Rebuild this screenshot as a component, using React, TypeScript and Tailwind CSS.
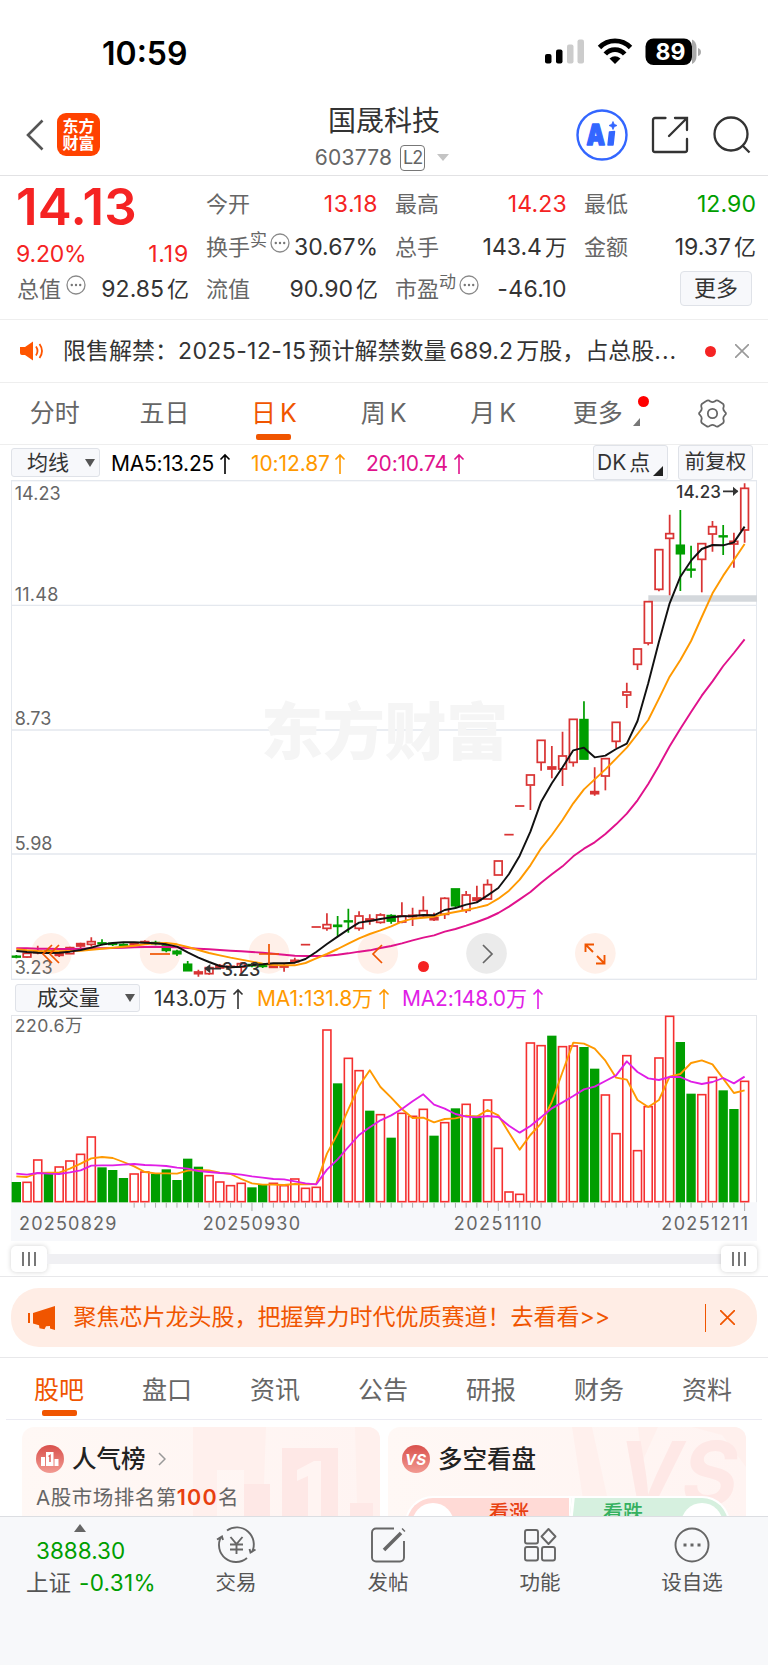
import type { ReactNode } from "react";

const RED = "#d93434";
const GREEN = "#009e00";
const FIRST_X = 16;
const STEP = 32.13;

// [up, high, top, bottom, low] in chart units, three to a pixel
const candles: [number, number, number, number, number][] = [
  [0, 1425, 1428, 1432, 1435], [1, 1416, 1419, 1432, 1434], [1, 1397, 1413, 1419, 1423], [0, 1405, 1412, 1418, 1422],
  [1, 1415, 1419, 1427, 1431], [1, 1400, 1402, 1422, 1422], [1, 1388, 1390, 1399, 1405], [1, 1372, 1384, 1394, 1400],
  [0, 1378, 1388, 1392, 1396], [0, 1386, 1389, 1394, 1398], [0, 1390, 1393, 1397, 1400], [1, 1387, 1390, 1396, 1399],
  [1, 1381, 1384, 1388, 1392], [0, 1382, 1387, 1392, 1396], [0, 1395, 1397, 1412, 1417], [0, 1409, 1413, 1422, 1428],
  [0, 1443, 1452, 1473, 1473], [1, 1469, 1475, 1482, 1490], [1, 1458, 1462, 1482, 1484], [1, 1452, 1456, 1465, 1467],
  [1, 1455, 1458, 1462, 1466], [1, 1446, 1450, 1462, 1484], [0, 1448, 1453, 1458, 1462], [0, 1450, 1455, 1460, 1464],
  [1, 1452, 1455, 1463, 1463], [1, 1452, 1457, 1462, 1475], [1, 1433, 1440, 1446, 1450], [1, 1394, 1394, 1394, 1394],
  [1, 1341, 1341, 1341, 1341], [1, 1300, 1333, 1346, 1352], [0, 1308, 1335, 1340, 1370], [0, 1286, 1322, 1326, 1358],
  [1, 1294, 1307, 1346, 1352], [1, 1303, 1316, 1323, 1334], [1, 1300, 1304, 1328, 1331], [0, 1303, 1306, 1324, 1331],
  [1, 1267, 1307, 1327, 1330], [1, 1283, 1305, 1311, 1338], [1, 1249, 1291, 1308, 1310], [1, 1298, 1312, 1320, 1323],
  [1, 1252, 1254, 1304, 1317], [0, 1226, 1226, 1278, 1285], [1, 1233, 1244, 1292, 1299], [1, 1217, 1253, 1262, 1266],
  [1, 1198, 1213, 1258, 1258], [1, 1142, 1142, 1186, 1186], [1, 1064, 1064, 1064, 1064], [1, 978, 978, 978, 978],
  [1, 884, 884, 916, 990], [1, 780, 780, 848, 872], [1, 798, 860, 868, 895], [1, 755, 827, 868, 918],
  [1, 717, 717, 848, 860], [0, 664, 718, 838, 838], [1, 862, 934, 942, 947], [1, 835, 835, 889, 931],
  [1, 726, 726, 785, 804], [1, 608, 635, 646, 684], [1, 506, 506, 554, 570], [1, 364, 364, 490, 496],
  [1, 208, 208, 329, 334], [1, 104, 160, 176, 346], [0, 90, 195, 222, 333], [0, 197, 267, 271, 293],
  [1, 190, 190, 239, 337], [1, 123, 139, 163, 215], [0, 135, 167, 171, 225], [1, 158, 183, 193, 263],
  [1, 10, 24, 151, 188],
];

const ma5 = [
  1413, 1416, 1418, 1419, 1418, 1415, 1410, 1403, 1394, 1389, 1387, 1387, 1388, 1390, 1393, 1400, 1417, 1433, 1446, 1458,
  1462, 1460, 1455, 1453, 1450, 1450, 1448, 1437, 1416, 1392, 1370, 1348, 1328, 1323, 1317, 1312, 1309, 1308, 1305, 1306,
  1290, 1284, 1274, 1267, 1246, 1224, 1182, 1127, 1055, 965, 910, 862, 811, 803, 832, 827, 807, 791, 723, 610,
  485, 370, 290, 242, 207, 195, 196, 187, 140,
];
const ma10 = [
  1408, 1411, 1413, 1414, 1414, 1413, 1412, 1409, 1406, 1403, 1400, 1397, 1393, 1390, 1389, 1393, 1401, 1410, 1419, 1426,
  1433, 1439, 1445, 1451, 1455, 1456, 1456, 1449, 1435, 1422, 1407, 1391, 1375, 1362, 1351, 1339, 1325, 1316, 1313, 1310,
  1302, 1296, 1290, 1283, 1275, 1256, 1232, 1199, 1156, 1105, 1065, 1020, 970, 928, 898, 868, 836, 803, 762, 720,
  656, 590, 540, 483, 411, 340, 287, 240, 192,
];
const ma20 = [
  1405, 1405, 1406, 1406, 1407, 1407, 1406, 1405, 1405, 1404, 1403, 1402, 1401, 1400, 1401, 1402, 1404, 1406, 1408, 1410,
  1412, 1414, 1416, 1418, 1421, 1424, 1427, 1428, 1428, 1427, 1424, 1420, 1415, 1411, 1404, 1398, 1390, 1381, 1373, 1366,
  1355, 1347, 1337, 1326, 1314, 1299, 1280, 1258, 1236, 1208, 1183, 1159, 1129, 1106, 1087, 1062, 1033, 1001, 961, 912,
  857, 799, 746, 696, 647, 604, 558, 519, 478,
];

// top edge of each volume bar
const volumes = [
  605, 605, 538, 580, 559, 541, 521, 469, 561, 569, 593, 580, 574, 580, 567, 599, 535, 559, 585, 604,
  615, 608, 621, 613, 608, 615, 595, 623, 620, 148, 309, 233, 270, 391, 402, 472, 398, 407, 386, 466,
  426, 384, 371, 406, 358, 503, 634, 641, 187, 195, 166, 198, 196, 200, 265, 343, 459, 225, 510, 378,
  232, 107, 185, 340, 342, 290, 330, 386, 302,
];
const falling = [0, 3, 8, 9, 10, 13, 14, 15, 16, 17, 22, 23, 30, 33, 35, 39, 41, 43, 50, 53, 54, 62, 63, 66, 67];
const volMa1 = [
  588, 590, 578, 577, 577, 565, 550, 534, 530, 533, 545, 558, 575, 579, 579, 580, 571, 569, 570, 577,
  581, 596, 609, 613, 613, 614, 611, 612, 611, 520, 460, 387, 317, 270, 320, 352, 386, 413, 412, 426,
  416, 414, 406, 409, 389, 405, 457, 508, 464, 429, 365, 275, 187, 190, 205, 241, 292, 298, 359, 380,
  359, 289, 281, 248, 240, 252, 295, 338, 330,
];
const volMa2 = [
  580, 583, 578, 580, 581, 576, 570, 556, 555, 555, 553, 551, 554, 555, 557, 562, 565, 572, 575, 578,
  580, 583, 588, 592, 596, 597, 603, 609, 612, 568, 537, 500, 464, 441, 420, 405, 386, 363, 342, 373,
  385, 401, 409, 411, 407, 410, 436, 457, 437, 411, 384, 366, 347, 327, 319, 302, 285, 243, 275, 294,
  299, 290, 290, 304, 311, 305, 293, 309, 289,
];

const x = (i: number) => FIRST_X + i * STEP;
const line = (ys: number[]) => ys.map((y, i) => `${x(i).toFixed(1)},${y}`).join(" ");

function Up() {
  return (
    <svg viewBox="0 0 12 22" className="h-[22px] w-3 shrink-0" fill="none" stroke="currentColor" strokeWidth="1.6">
      <path d="M6 21V2M1.500 6.500 6 2l4.500 4.500" />
    </svg>
  );
}

function Info() {
  return (
    <svg viewBox="0 0 20 20" className="size-5 shrink-0" fill="none" stroke="#8a8a8a" strokeWidth="1.300">
      <circle cx="10" cy="10" r="9" />
      <g fill="#777" stroke="none">
        <circle cx="5.800" cy="10" r="1.200" />
        <circle cx="10" cy="10" r="1.200" />
        <circle cx="14.200" cy="10" r="1.200" />
      </g>
    </svg>
  );
}

function StatusBar() {
  return (
    <div className="flex h-[90px] items-center pt-[17px] pl-[102px] text-black">
      <span className="w-[443px] text-[32px] font-semibold">10:59</span>
      <svg viewBox="0 0 158 30" className="mb-[3px] h-[30px] w-[158px]">
        <rect x="0" y="17" width="6.500" height="9.500" rx="2" />
        <rect x="11" y="12.500" width="6.500" height="14" rx="2" />
        <rect x="22" y="7.500" width="6.500" height="19" rx="2" fill="#ccc" />
        <rect x="32.500" y="2.500" width="6.500" height="24" rx="2" fill="#ccc" />
        <g fill="none" stroke="#000" strokeWidth="4.800">
          <path d="M54.500 10.500a21.500 21.500 0 0 1 31 0" />
          <path d="M60.300 17a13 13 0 0 1 19.400 0" />
        </g>
        <path d="M64.500 21.500q5.500-4.500 11 0L70 27z" />
        <path d="M147 2.500q4.500 2 4.500 8v8.500q0 6-4.500 8z" fill="#aaa" />
        <rect x="100.500" y="1.500" width="46.500" height="26.500" rx="8" />
        <path d="M153 11q3 1 3 4t-3 4z" fill="#aaa" />
        <text x="125.500" y="23" textAnchor="middle" fill="#fff" className="text-[23px] font-bold">89</text>
      </svg>
    </div>
  );
}

function Header() {
  return (
    <header className="grid h-[86px] grid-cols-[1fr_auto_1fr] items-center border-b border-[#e2e2e4] pt-1">
      <div className="flex items-center gap-[13px] pl-[26px]">
        <svg viewBox="0 0 18 32" className="h-8 w-[18px]" fill="none" stroke="#555" strokeWidth="2.600">
          <path d="M16.500 1.500 2 16l14.500 14.500" />
        </svg>
        <div className="flex size-[43px] flex-col items-center justify-center rounded-[9px] bg-[#ff4200] text-[16px] leading-[17px] font-bold text-white">
          <span>东方</span>
          <span>财富</span>
        </div>
      </div>
      <div className="flex flex-col items-center pt-2 text-[#333]">
        <h1 className="text-[28px] leading-[34px]">国晟科技</h1>
        <div className="flex h-[36px] items-center pt-1 text-[21px] text-[#666]">
          <span className="tracking-[0.2px]">603778</span>
          <span className="ml-2 flex h-[26px] w-[25px] items-center justify-center rounded-[4px] border border-[#777] text-[18px] tracking-[-1px]">L2</span>
          <span className="mr-1 ml-3 border-x-6 border-t-7 border-x-transparent border-t-[#c4c4c4]" />
        </div>
      </div>
      <div className="flex items-center justify-end pr-[17px]">
        <svg viewBox="0 0 52 52" className="mr-[23px] size-[52px]">
          <circle cx="26" cy="26" r="24.500" fill="none" stroke="#3366ff" strokeWidth="2.400" />
          <g fill="#3366ff" stroke="#3366ff" strokeLinejoin="round">
            <text x="10.500" y="35.500" strokeWidth="1.500" textLength="18.500" lengthAdjust="spacingAndGlyphs" className="text-[29px] font-black">A</text>
            <path d="m33.500 23 5-.5-1.500 13.500h-5z" strokeWidth="1.500" />
            <path d="M37 12.500l1.200 2.800 2.800 1.200-2.800 1.200L37 20.500l-1.200-2.800-2.800-1.200 2.800-1.200z" strokeWidth="0.800" />
          </g>
        </svg>
        <svg viewBox="0 0 38 38" className="mr-6 size-[38px]" fill="none" stroke="#333" strokeWidth="2.300" strokeLinecap="round">
          <path d="M14.500 2H4a2 2 0 0 0-2 2v30a2 2 0 0 0 2 2h30a2 2 0 0 0 2-2V23M24 2h12v12M36 2 18 20" />
        </svg>
        <svg viewBox="0 0 38 38" className="size-[38px]" fill="none" stroke="#333" strokeWidth="2.300">
          <circle cx="18" cy="18" r="16.500" />
          <path d="m29.500 29.500 7 7" />
        </svg>
      </div>
    </header>
  );
}

function Stat({ label, sup, info, value, unit, tone = "text-[#333]" }: { label: string; sup?: string; info?: boolean; value: string; unit?: string; tone?: string }) {
  return (
    <div className="flex h-[43px] items-center justify-between text-[22px]">
      <span className="flex items-center text-[#666]">
        {label}
        {sup && <sup className="-top-2 text-[17px]">{sup}</sup>}
        {info && <span className={`-mt-2.5 ${sup ? "ml-[3px]" : "ml-[5px]"}`}><Info /></span>}
      </span>
      <span className={`${tone} text-[23px] whitespace-nowrap`}>{value}{unit && <span className="ml-[3px] text-[22px]">{unit}</span>}</span>
    </div>
  );
}

function Quote() {
  return (
    <section className="grid h-[144px] grid-cols-[172px_172px_172px_172px] gap-x-[17px] border-b border-[#eee] pt-[7px] pl-[17px]">
      <div>
        <div className="-ml-px flex h-[48px] items-center text-[51px] font-semibold tracking-[0.3px] text-[#f52323]">14.13</div>
        <div className="flex h-[43px] items-center justify-between pt-[3px] text-[23px] text-[#f52323]">
          <span className="-ml-px tracking-[-0.2px]">9.20%</span>
          <span className="tracking-[0.8px]">1.19</span>
        </div>
        <div className="-mt-[6px]"><Stat label="总值" info value="92.85" unit="亿" /></div>
      </div>
      <div>
        <Stat label="今开" value="13.18" tone="text-[#f52323] tracking-[0.6px]" />
        <Stat label="换手" sup="实" info value="30.67%" />
        <div className="-mt-px"><Stat label="流值" value="90.90" unit="亿" /></div>
      </div>
      <div>
        <Stat label="最高" value="14.23" tone="text-[#f52323] tracking-[0.2px]" />
        <Stat label="总手" value="143.4" unit="万" />
        <div className="-mt-px"><Stat label="市盈" sup="动" info value="-46.10" tone="text-[#333] tracking-[0.4px]" /></div>
      </div>
      <div>
        <Stat label="最低" value="12.90" tone="text-[#009e00] tracking-[0.1px]" />
        <Stat label="金额" value="19.37" unit="亿" />
        <div className="mt-0.5 mr-1 ml-auto flex h-[35px] w-[72px] items-center justify-center rounded-[4px] border border-[#dfe2e8] bg-[#f7f8fb] text-[22px] text-[#333]">更多</div>
      </div>
    </section>
  );
}

function Notice() {
  return (
    <section className="flex h-[63px] items-center border-b border-[#eee] pl-5 text-[23px] text-[#333]">
      <svg viewBox="0 0 24 20" className="h-5 w-6" fill="none" stroke="#ff5500" strokeWidth="1.800">
        <path d="M0 6h5l8-5.500v19L5 14H2q-2 0-2-2z" fill="#ff5500" stroke="none" />
        <path d="M16 5.500q3 4.500 0 9M19.500 3q5 7 0 14" />
      </svg>
      <p className="ml-[19px] w-[615px] whitespace-nowrap">
        限售解禁：<span className="mr-0.5 tracking-[0.4px]">2025-12-15</span>预计解禁数量<span className="mx-[3px] tracking-[0.2px]">689.2</span>万股，占总股<span className="tracking-[1px]">...</span>
      </p>
      <span className="ml-[27px] size-[11px] rounded-full bg-[#f52323]" />
      <svg viewBox="0 0 14 14" className="ml-[19px] size-3.5" stroke="#999" strokeWidth="1.600"><path d="m0 0 14 14M14 0 0 14" /></svg>
    </section>
  );
}

function PeriodTabs() {
  return (
    <nav className="flex h-[62px] border-b border-[#eee] text-[25px] text-[#666]">
      {["分时", "五日", "日 K", "周 K", "月 K", "更多"].map((t) => (
        <div key={t} className={`relative flex w-[109.600px] items-center justify-center [word-spacing:-3px] ${t === "日 K" ? "text-[#f05500]" : ""} ${t === "更多" ? "pr-[10px]" : ""}`}>
          {t}
          {t === "日 K" && <span className="absolute bottom-1 h-1.5 w-[35px] rounded-[2px] bg-[#f05500]" />}
          {t === "更多" && (
            <>
              <span className="absolute top-[13px] right-[9px] size-[11px] rounded-full bg-[#f00]" />
              <span className="absolute right-[18px] bottom-[18px] border-b-8 border-l-7 border-b-[#777] border-l-transparent" />
            </>
          )}
        </div>
      ))}
      <div className="flex flex-1 items-center justify-center">
        <svg viewBox="0 0 28 28" className="size-[29px]" fill="none" stroke="#666" strokeWidth="1.700" strokeLinejoin="round">
          <path d="M8 2q2-1.500 4 .5 2 1.200 4 0 2-2 4-.5l4 2.500q1.500 1.500.5 4-.5 2 1.500 4 2 1.500 0 3-2 2-1.500 4 1 2.500-.5 4L20 26q-2 1.500-4-.5-2-1.200-4 0-2 2-4 .5l-4-2.500q-1.500-1.500-.5-4 .5-2-1.500-4-2-1.500 0-3 2-2 1.500-4-1-2.500.5-4z" />
          <circle cx="14" cy="14" r="4.500" />
        </svg>
      </div>
    </nav>
  );
}

function Candles() {
  return (
    <svg viewBox="0 0 2238 1500" className="h-[500px] w-[746px]">
      <g stroke="#e4e8ee" strokeWidth="4" fill="none">
        <path d="M0 376h2238M0 750h2238M0 1122h2238" />
        <rect x="1" y="2" width="2236" height="1496" />
      </g>
      <text x="750" y="825" textLength="742" fill="#f5f5f5" className="text-[186px] font-black">东方财富</text>
      <path d="M1912 346h326v19h-326z" fill="#d4d8dc" />
      {[0, 1, 2, 3, 4, 5].map((n) => (
        <circle key={n} cx={121 + n * 326.4} cy="1420" r="61" fill={n === 4 ? "#ebebeb" : "#fff0e9"} />
      ))}
      {candles.map(([up, high, top, bottom, low], i) => (
        <g key={i} stroke={up ? RED : GREEN} strokeWidth="5.200" fill={up ? (bottom - top > 9 ? "#fff" : RED) : GREEN}>
          <path d={`M${x(i)} ${high}V${top}M${x(i)} ${bottom}V${low}`} />
          {top === bottom ? <path d={`M${x(i) - 14} ${top}h28`} /> : <rect x={x(i) - 11.5} y={top + 1} width="23" height={bottom - top - 2} />}
        </g>
      ))}
      <g fill="none" strokeWidth="5.800" strokeLinejoin="round">
        <polyline points={line(ma20)} stroke="#e0128c" />
        <polyline points={line(ma10)} stroke="#ff9900" />
        <polyline points={line(ma5)} stroke="#111" />
      </g>
      <g fill="#666" className="text-[54px]">
        <text x="11" y="60" textLength="138">14.23</text>
        <text x="11" y="362" textLength="131">11.48</text>
        <text x="11" y="736">8.73</text>
        <text x="11" y="1109">5.98</text>
        <text x="11" y="1482">3.23</text>
      </g>
      <g fill="#333" className="text-[51px] font-medium">
        <text x="1996" y="53" textLength="134">14.23</text>
        <text x="632" y="1487" className="text-[54px]">3.23</text>
      </g>
      <path d="M2136 34h44M584 1466h46" stroke="#333" strokeWidth="5" />
      <path d="m2166 20 16 14-16 14zM598 1452l-18 14 18 14z" fill="#333" />
    </svg>
  );
}

function ChartAction({ gray, children }: { gray?: boolean; children: ReactNode }) {
  return (
    <div className={`flex size-[41px] items-center justify-center ${gray ? "text-[#666]" : "text-[#f05500]"}`}>
      <svg viewBox="0 0 24 24" className="size-6" fill="none" stroke="currentColor" strokeWidth="1.700">{children}</svg>
    </div>
  );
}

function PriceChart() {
  return (
    <section className="relative mx-[11px] h-[500px]">
      <Candles />
      <div className="absolute top-[453px] left-5 flex gap-[67.800px]">
        <ChartAction><path d="m12 3-9 9 9 9M19 3l-9 9 9 9" /></ChartAction>
        <ChartAction><path d="M2 12h20" /></ChartAction>
        <ChartAction><path d="M2 12h20M12 2v20" /></ChartAction>
        <ChartAction><path d="m16 3-9 9 9 9" /></ChartAction>
        <ChartAction gray><path d="m8 3 9 9-9 9" /></ChartAction>
        <ChartAction><path d="M2.500 10V2.500H11M3 3l7 7M21.500 13v8.500H13M21 21l-7-7" strokeWidth="1.900" /></ChartAction>
      </div>
      <span className="absolute top-[481px] left-[407px] size-[11px] rounded-full bg-[#f52323]" />
    </section>
  );
}

function AverageRow() {
  return (
    <div className="flex h-[35px] items-center pl-[11px] text-[21px]">
      <div className="flex h-[29px] w-[89px] items-center justify-between rounded-[3px] border border-[#dfe2e8] bg-[#f7f8fb] pr-1 pl-[15px] text-[#333]">
        均线<span className="border-x-5 border-t-8 border-x-transparent border-t-[#555]" />
      </div>
      <span className="ml-[11px] flex w-[140px] items-center justify-between pt-0.5 pr-[20px] text-black"><span className="tracking-[-0.2px]">MA5:13.25</span><Up /></span>
      <span className="flex w-[115px] items-center justify-between pt-0.5 pr-[20px] text-[#ff9900]"><span className="tracking-[-0.1px]">10:12.87</span><Up /></span>
      <span className="flex w-[99px] items-center justify-between pt-0.5 text-[#e0128c]"><span className="tracking-[-0.2px]">20:10.74</span><Up /></span>
      <div className="relative ml-auto flex h-[35px] w-[75px] items-center rounded-[3px] border border-[#dfe2e8] bg-[#f7f8fb] pl-[3px] text-[#333] [word-spacing:-3px]">
        DK 点<span className="absolute right-1 bottom-[3px] border-b-10 border-l-10 border-b-[#222] border-l-transparent" />
      </div>
      <div className="mr-[15px] ml-2.5 flex h-[35px] w-[75px] items-center justify-center rounded-[3px] border border-[#dfe2e8] bg-[#f7f8fb] text-[20.500px] text-[#333]">前复权</div>
    </div>
  );
}

function VolumeRow() {
  return (
    <div className="flex h-[35px] items-center pl-[15px] text-[21px]">
      <div className="flex h-7 w-[125px] items-center justify-between rounded-[3px] border border-[#dfe2e8] bg-[#f7f8fb] pr-1 pl-[21px] text-[#333]">
        成交量<span className="border-x-5 border-t-8 border-x-transparent border-t-[#555]" />
      </div>
      <span className="ml-[14px] flex w-[103px] items-center justify-between pt-0.5 pr-[13px] text-[#333]"><span className="tracking-[-0.2px]">143.0万</span><Up /></span>
      <span className="flex w-[145px] items-center justify-between pt-0.5 pr-[12px] text-[#ff9900]"><span className="tracking-[-0.1px]">MA1:131.8万</span><Up /></span>
      <span className="flex w-[142px] items-center justify-between pt-0.5 text-[#e01ee6]"><span className="tracking-[-0.2px]">MA2:148.0万</span><Up /></span>
    </div>
  );
}

function VolumeChart() {
  return (
    <section className="mx-[11px] h-[226px]">
      <svg viewBox="0 104 2238 678" className="h-[226px] w-[746px]">
        <path d="M0 666h2238v116H0z" fill="#f7f8fb" />
        <path d="M1 666V105h2236v561" fill="none" stroke="#e4e6ea" strokeWidth="4" />
        {volumes.map((top, i) =>
          falling.includes(i) ? (
            <rect key={i} x={x(i) - 14} y={top} width="28" height={666 - top} fill={GREEN} />
          ) : (
            <rect key={i} x={x(i) - 12} y={top + 1} width="24" height={663 - top} fill="#fff" stroke="#f5302f" strokeWidth="4.800" />
          ),
        )}
        <g fill="none" strokeWidth="5.600" strokeLinejoin="round">
          <polyline points={line(volMa1)} stroke="#ff9900" />
          <polyline points={line(volMa2)} stroke="#e01ee6" />
        </g>
        {volumes.map((_, i) => i > 10 && <path key={i} d={`M${x(i)} 667v${i % 23 === 22 || i === 68 ? 25 : 15}`} stroke="#aaa" strokeWidth="3" />)}
        <g fill="#666" className="text-[54px]">
          <text x="11" y="156" textLength="204" className="text-[53px]">220.6万</text>
          <text x="24" y="749" textLength="292">20250829</text>
          <text x="575" y="749" textLength="292">20250930</text>
          <text x="1328" y="749" textLength="264">20251110</text>
          <text x="1951" y="749" textLength="260">20251211</text>
        </g>
      </svg>
    </section>
  );
}

function Grip() {
  return (
    <div className="flex h-[26px] w-9 items-center justify-center gap-1 rounded-[5px] bg-white shadow-[0_0_5px_rgba(0,0,0,0.18)]">
      <span className="h-[14px] w-0.5 bg-[#777]" />
      <span className="h-[14px] w-0.5 bg-[#777]" />
      <span className="h-[14px] w-0.5 bg-[#777]" />
    </div>
  );
}

function Promo() {
  return (
    <section className="h-[82px] border-y border-[#e8e8ea] px-[11px] pt-[11px]">
      <div className="flex h-[59px] items-center rounded-[28px] bg-[#ffede5] pl-[17px] text-[23px] text-[#f05500]">
        <svg viewBox="0 0 28 24" className="h-6 w-7" fill="#f05500">
          <path d="M0 7h2v10H0zM5 7 27 0v24l-5-1.500V20l-4 .3-1.500 3-5-1-.5-3L5 17.500z" />
        </svg>
        <span className="ml-[17.500px] whitespace-nowrap">聚焦芯片龙头股，把握算力时代优质赛道！去看看&gt;&gt;</span>
        <span className="ml-auto h-7 w-[1.500px] bg-[#f05500]" />
        <svg viewBox="0 0 14 14" className="mr-[22px] ml-[14px] size-[15px]" stroke="#f05500" strokeWidth="1.600"><path d="m0 0 14 14M14 0 0 14" /></svg>
      </div>
    </section>
  );
}

function InfoTabs() {
  return (
    <nav className="mx-1.5 flex h-[62px] border-b border-[#ebebf2] text-[25px] text-[#666]">
      {["股吧", "盘口", "资讯", "公告", "研报", "财务", "资料"].map((t, i) => (
        <div key={t} className={`relative flex w-[108.100px] items-center justify-center pt-1 pr-[2px] ${i === 0 ? "text-[#f05500]" : ""}`}>
          {t}
          {i === 0 && <span className="absolute bottom-[3px] h-1.5 w-[35px] rounded-[2px] bg-[#f05500]" />}
        </div>
      ))}
    </nav>
  );
}

function Cards() {
  return (
    <section className="flex h-[96px] gap-2 overflow-hidden pt-[7px] pl-[22px] text-[20.500px] text-[#666]">
      <div className="relative h-[140px] w-[358px] overflow-hidden rounded-[12px] bg-linear-to-r from-[#fff8f5] to-[#fff4f2] pl-3.5">
        <svg viewBox="0 0 187 92" className="absolute top-0 right-0 h-[92px] w-[187px]">
          <path d="M0 0h73l-2 57H51V43H24v49H0zM162 0h25v92h-7V76h-16z" fill="#fff0ed" />
          <path d="M89 21h56v71H89zM51 57h26v35H51zM157 76h23v16h-23z" fill="#fee8e6" />
          <path d="m104 43 17-9h7v58h-13V49l-11 5z" fill="#fff4f2" />
        </svg>
        <div className="relative flex h-16 items-center text-[24.500px] font-medium text-[#222]">
          <svg viewBox="0 0 28 28" className="mr-2 size-7">
            <linearGradient id="badge" x2="0" y2="1">
              <stop stopColor="#d9504c" />
              <stop offset="1" stopColor="#f29a92" />
            </linearGradient>
            <circle cx="14" cy="14" r="14" fill="url(#badge)" />
            <path d="M5 12h4v9H5zM10 7h7.500v14H10zM18.500 14h4v7h-4z" fill="#fff" />
            <path d="m12.500 11.500 1.500-1V17" fill="none" stroke="#e0605c" strokeWidth="1.500" />
          </svg>
          人气榜
          <svg viewBox="0 0 8 14" className="ml-3 h-3.5 w-2" fill="none" stroke="#999" strokeWidth="1.500"><path d="m1 1 6 6-6 6" /></svg>
        </div>
        <p className="relative -mt-2 whitespace-nowrap tracking-[0.5px]">A股市场排名第<b className="text-[21.500px] leading-none font-semibold tracking-[1.300px] text-[#e84010]">100</b>名</p>
      </div>
      <div className="relative h-[140px] w-[358px] overflow-hidden rounded-[12px] bg-linear-to-r from-[#fff8f5] to-[#fff4f2] pl-3.5">
        <svg viewBox="0 0 174 92" className="absolute top-0 right-0 h-[92px] w-[174px]">
          <path d="M0 0h20l20 92H14zM66 0h20L70 35zM120 0h54v40L150 8z" fill="#fff0ed" />
          <text x="46" y="78" textLength="120" lengthAdjust="spacingAndGlyphs" fill="#fee8e6" className="text-[88px] font-bold italic">VS</text>
        </svg>
        <div className="relative flex h-16 items-center text-[24.500px] font-medium text-[#222]">
          <svg viewBox="0 0 28 28" className="mr-[8px] size-7">
            <circle cx="14" cy="14" r="14" fill="url(#badge)" />
            <text x="13.500" y="19.500" textAnchor="middle" fill="#fff" className="text-[15px] font-bold italic">VS</text>
          </svg>
          多空看盘
        </div>
        <div className="absolute top-[69px] left-[17px] flex h-[56px] w-[325px] overflow-hidden rounded-full border-2 border-white bg-white text-[20px] font-medium">
          <div className="w-[162px] bg-[#ffdad6] pl-[82px] text-[#e84010]">看涨</div>
          <div className="w-[159px] -skew-x-6 border-l-3 border-white bg-[#d6f0df]" />
          <span className="absolute top-0 left-[196px] text-[#35b05f]">看跌</span>
          <span className="absolute top-[5px] left-[5px] size-[42px] rounded-full bg-white" />
          <span className="absolute top-[5px] right-[5px] size-[42px] rounded-full bg-white" />
        </div>
      </div>
    </section>
  );
}

const actions = [
  {
    label: "交易",
    icon: <path d="M10 4.500A17 17 0 0 1 35 26M38.500 23.500 33.500 26.500 32.500 23M30 32A17 17 0 0 1 4 11M0 13.500 5 10.500l1 3.500M13.500 11l6 7 6-7M13 18.500h13M13 23.500h13M19.500 18v10" />,
  },
  {
    label: "发帖",
    icon: (
      <>
        <path d="M25 2.500H7a4 4 0 0 0-4 4v25a4 4 0 0 0 4 4h24a4 4 0 0 0 4-4V15" />
        <path d="M32 7 15 24" strokeWidth="3.500" />
        <path d="m34 4.500 1-1" strokeWidth="4" />
      </>
    ),
  },
  {
    label: "功能",
    icon: (
      <>
        <rect x="4" y="4" width="13" height="13.500" rx="2" />
        <rect x="4" y="21" width="13" height="13.500" rx="2" />
        <rect x="21" y="21" width="13" height="13.500" rx="2" />
        <path d="m27.500 3 7 7.500-7 7.500-7-7.500z" strokeLinejoin="round" />
      </>
    ),
  },
  {
    label: "设自选",
    icon: (
      <>
        <circle cx="19" cy="19" r="16.500" />
        <path d="M10.500 19h3M17.500 19h3M24.500 19h3" strokeWidth="3" />
      </>
    ),
  },
];

function BottomBar() {
  return (
    <footer className="flex h-[149px] border-t border-[#dcdee2] bg-[#f7f8fa] text-[20.500px] text-[#555]">
      <div className="w-[160px] pt-[7px]">
        <div className="ml-[74px] h-2 w-0 border-x-6 border-b-8 border-x-transparent border-b-[#666]" />
        <div className="mt-[3px] pl-9 text-[22.500px] leading-8 text-[#009e00]">3888.30</div>
        <div className="flex items-center pl-[26px] text-[22.500px] leading-8 whitespace-nowrap">上证<span className="ml-2 tracking-[0.3px] text-[#009e00]">-0.31%</span></div>
      </div>
      {actions.map((a) => (
        <div key={a.label} className="flex w-[152px] flex-col items-center pt-[9px]">
          <svg viewBox="0 0 38 38" className="size-[38px] overflow-visible" fill="none" stroke="#666" strokeWidth="1.900">{a.icon}</svg>
          <span className="mt-1 leading-[30px]">{a.label}</span>
        </div>
      ))}
    </footer>
  );
}

export default function App() {
  return (
    <main className="h-[1665px] w-[768px] overflow-hidden bg-white font-[Inter,'Noto_Sans_CJK_SC',sans-serif]">
      <StatusBar />
      <Header />
      <Quote />
      <Notice />
      <PeriodTabs />
      <AverageRow />
      <PriceChart />
      <VolumeRow />
      <VolumeChart />
      <div className="mx-[11px] flex h-[35px] items-center">
        <Grip />
        <div className="h-2.5 flex-1 bg-[#f0f0f3]" />
        <Grip />
      </div>
      <Promo />
      <InfoTabs />
      <Cards />
      <BottomBar />
    </main>
  );
}
